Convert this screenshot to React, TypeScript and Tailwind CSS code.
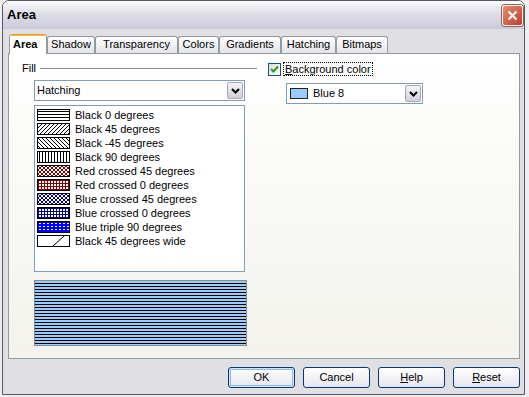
import React from "react";

type Px = [number, number];

const diagUp: Px[] = [[3, 0], [2, 1], [1, 2], [0, 3]];
const diagDown: Px[] = [[0, 0], [1, 1], [2, 2], [3, 3]];
const row = (w: number, y: number): Px[] => Array.from({ length: w }, (_, x) => [x, y] as Px);
const col = (h: number, x: number): Px[] => Array.from({ length: h }, (_, y) => [x, y] as Px);

type Hatch = { label: string; w: number; h: number; px: Px[]; fg: string; bg: string; wide?: boolean };

const hatches: Hatch[] = [
  { label: "Black 0 degrees", w: 1, h: 3, px: [[0, 1]], fg: "#000", bg: "#fff" },
  { label: "Black 45 degrees", w: 4, h: 4, px: diagUp, fg: "#000", bg: "#fff" },
  { label: "Black -45 degrees", w: 4, h: 4, px: diagDown, fg: "#000", bg: "#fff" },
  { label: "Black 90 degrees", w: 3, h: 1, px: [[1, 0]], fg: "#000", bg: "#fff" },
  { label: "Red crossed 45 degrees", w: 4, h: 4, px: [...diagUp, ...diagDown], fg: "#800000", bg: "#fff" },
  { label: "Red crossed 0 degrees", w: 3, h: 3, px: [...row(3, 0), ...col(3, 0)], fg: "#800000", bg: "#fff" },
  { label: "Blue crossed 45 degrees", w: 4, h: 4, px: [...diagUp, ...diagDown], fg: "#000080", bg: "#fff" },
  { label: "Blue crossed 0 degrees", w: 3, h: 3, px: [...row(3, 0), ...col(3, 0)], fg: "#000080", bg: "#fff" },
  { label: "Blue triple 90 degrees", w: 4, h: 3, px: [[1, 1], [2, 1]], fg: "#fff", bg: "#0000ff" },
  { label: "Black 45 degrees wide", w: 1, h: 1, px: [], fg: "#000", bg: "#fff", wide: true },
];

function Swatch({ h, id }: { h: Hatch; id: string }) {
  return (
    <svg width="33" height="12" viewBox="0 0 33 12" shapeRendering="crispEdges" className="shrink-0">
      <defs>
        <pattern id={id} x="1" y="1" width={h.w} height={h.h} patternUnits="userSpaceOnUse">
          <rect width={h.w} height={h.h} fill={h.bg} />
          {h.px.map(([x, y], i) => (
            <rect key={i} x={x} y={y} width="1" height="1" fill={h.fg} />
          ))}
        </pattern>
      </defs>
      <rect x="0.5" y="0.5" width="32" height="11" fill={`url(#${id})`} stroke="#000" />
      {h.wide && <path d="M16 11 L27 1" stroke="#000" shapeRendering="auto" />}
    </svg>
  );
}

function DropButton() {
  return (
    <div className="flex h-[17px] w-[16px] items-center justify-center rounded-[2px] border border-[#a9a8bf] bg-gradient-to-b from-[#f4f4f8] to-[#cfcedd]">
      <svg width="9" height="6" viewBox="0 0 9 6">
        <path d="M1 1 L4.5 4.5 L8 1" fill="none" stroke="#000" strokeWidth="2" />
      </svg>
    </div>
  );
}

function Button({ children, primary }: { children: React.ReactNode; primary?: boolean }) {
  return (
    <div
      className={
        "flex h-[21px] w-[67px] items-center justify-center rounded-[3px] border border-[#003c74] bg-gradient-to-b from-white to-[#e6e5ee] " +
        (primary ? "shadow-[inset_0_0_0_1px_#cee7ff,inset_0_0_0_2px_#98b8ea]" : "")
      }
    >
      {children}
    </div>
  );
}

const tabs: [string, number][] = [
  ["Shadow", 48],
  ["Transparency", 83],
  ["Colors", 41],
  ["Gradients", 62],
  ["Hatching", 55],
  ["Bitmaps", 52],
];

export default function App() {
  return (
    <div className="h-[397px] w-[529px] bg-[#efeff2] pl-[2px] font-['Liberation_Sans',Tahoma,Arial,sans-serif] text-[11px] text-black">
      <div className="flex h-[395px] w-[523px] flex-col overflow-hidden rounded-t-[7px] border border-[#565668]">
        {/* title bar */}
        <div className="flex h-[28px] items-center justify-between bg-gradient-to-b from-[#fbfbfd] via-[#dcdce6] to-[#cbcad9] pl-[4px] pr-[1px]">
          <span className="text-[13px] font-bold">Area</span>
          <div className="flex h-[21px] w-[21px] items-center justify-center rounded-[3px] border border-white bg-gradient-to-br from-[#e98a72] to-[#c13a25] shadow-[0_0_0_1px_#a06050]">
            <svg width="11" height="11" viewBox="0 0 11 11">
              <path d="M1.5 1.5 L9.5 9.5 M9.5 1.5 L1.5 9.5" stroke="#fff" strokeWidth="2" />
            </svg>
          </div>
        </div>

        {/* body */}
        <div className="flex-1 bg-[#e0dfe3] pt-[5px]">
          <div className="ml-[6px] flex h-[19px] items-end">
            <div className="relative z-10 mb-[-1px] flex h-[20px] w-[38px] flex-col rounded-t-[3px] border-x border-[#919b9c] bg-white">
              <div className="h-[3px] rounded-t-[3px] bg-gradient-to-b from-[#e68b2c] to-[#ffc83c]" />
              <div className="flex flex-1 items-center pl-[3px] pb-[2px] font-bold">Area</div>
            </div>
            {tabs.map(([t, w]) => (
              <div
                key={t}
                style={{ width: w }}
                className="flex h-[17px] items-center justify-center rounded-t-[3px] border-x border-t border-[#919b9c] bg-gradient-to-b from-white to-[#e4e3ea] pb-[1px]"
              >
                {t}
              </div>
            ))}
          </div>

          {/* tab panel */}
          <div className="ml-[5px] flex h-[306px] w-[512px] border border-[#919b9c] bg-gradient-to-b from-white to-[#f3f2ec] pl-[13px] pt-[7px]">
            <div className="flex w-[235px] flex-col">
              <div className="flex h-[14px] items-center">
                <span>Fill</span>
                <div className="ml-[4px] h-px flex-1 bg-[#8d8d96]" />
              </div>
              <div className="ml-[12px] mt-[5px] flex h-[21px] w-[211px] items-center justify-between border border-[#7f9db9] bg-white pl-[2px] pr-[1px]">
                <span>Hatching</span>
                <DropButton />
              </div>
              <div className="ml-[12px] mt-[4px] flex h-[167px] w-[211px] flex-col border border-[#7f9db9] bg-white pl-[2px] pt-[2px]">
                {hatches.map((h, i) => (
                  <div key={h.label} className="flex h-[14px] items-center gap-[5px]">
                    <Swatch h={h} id={`hp${i}`} />
                    <span>{h.label}</span>
                  </div>
                ))}
              </div>
              <div className="ml-[12px] mt-[8px] h-[66px] w-[213px] border border-[#8a8a8a] bg-[repeating-linear-gradient(to_bottom,#99ccff_0px,#99ccff_2px,#000_2px,#000_3px)]" />
            </div>

            <div className="ml-[11px] flex flex-col">
              <div className="mt-[1px] flex h-[14px] items-center">
                <div className="flex h-[13px] w-[13px] items-center justify-center border border-[#1c5180] bg-gradient-to-br from-[#dcdcd7] to-white">
                  <svg width="9" height="9" viewBox="0 0 9 9">
                    <path d="M1 4 L3.5 6.5 L8 1.5" fill="none" stroke="#21a121" strokeWidth="2" />
                  </svg>
                </div>
                <span className="ml-[2px] flex h-[14px] items-center border border-dotted border-black px-[1px]">
                  <span className="underline">B</span>ackground color
                </span>
              </div>
              <div className="ml-[18px] mt-[7px] flex h-[21px] w-[137px] items-center border border-[#7f9db9] bg-white pl-[3px] pr-[1px]">
                <div className="h-[11px] w-[18px] border border-[#222] bg-[#99ccff]" />
                <span className="ml-[5px] flex-1">Blue 8</span>
                <DropButton />
              </div>
            </div>
          </div>

          {/* buttons */}
          <div className="mt-[8px] flex w-[517px] justify-end gap-[8px]">
            <Button primary>OK</Button>
            <Button>Cancel</Button>
            <Button>
              <span>
                <span className="underline">H</span>elp
              </span>
            </Button>
            <Button>
              <span>
                <span className="underline">R</span>eset
              </span>
            </Button>
          </div>
        </div>
      </div>
    </div>
  );
}
